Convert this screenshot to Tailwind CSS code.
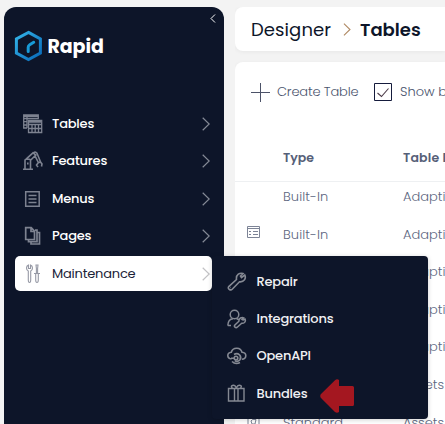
<!DOCTYPE html>
<html lang="en">
<head>
<meta charset="utf-8">
<title>Designer - Tables</title>
<script src="https://cdn.jsdelivr.net/npm/@tailwindcss/browser@4"></script>
</head>
<body class="w-[445px] h-[424px] overflow-hidden bg-[#f3f3f3] font-[Poppins,Inter,sans-serif] text-[13px] relative">
<svg class="hidden">
  <symbol id="chev" viewBox="0 0 8 14"><path d="M.7.7 7.2 7 .7 13.3" fill="none" stroke="currentColor" stroke-width="1.2"/></symbol>
</svg>
<div class="flex h-[424px] pl-1 pt-[7px] gap-[11px]">
  <aside class="w-[220px] shrink-0 bg-[#0d1529] rounded-t-[12px] text-white flex flex-col">
    <div class="flex justify-end h-[21px] pt-[7px] pr-2">
      <svg class="w-[6px] h-[9px]" viewBox="0 0 6 9" fill="none" stroke="#fff" stroke-width="1"><path d="M5 .5 1 4.5 5 8.5"/></svg>
    </div>
    <div class="flex items-center h-[36px] pl-[10px] gap-[5.5px]">
      <svg class="w-[28px] h-[32px]" viewBox="0 0 28 32" fill="none">
        <defs><linearGradient id="g" x1="0" y1="0" x2="1" y2="1"><stop stop-color="#34b5e8"/><stop offset="1" stop-color="#0869b8"/></linearGradient></defs>
        <path d="M14.5 2.4 26.4 9v14L14.5 29.6 2.4 23V9Z" stroke="url(#g)" stroke-width="3"/>
        <path d="M14.2 21.5v-4.2q0-1.7 1.5-2.6l4-2.4" stroke="#189bd8" stroke-width="3" stroke-linecap="round"/>
      </svg>
      <span class="font-bold text-[19px] leading-none tracking-[-0.1px]">Rapid</span>
    </div>
    <nav class="mt-[41px] pl-[11px] pr-3 font-medium leading-[20px] tracking-[-0.2px]">
      <div class="h-[37.5px] flex items-center pl-2 pr-[2px]">
        <svg class="w-[20px] h-[20px] text-[#7d8290]" viewBox="0 0 20 20" fill="none" stroke="currentColor" stroke-width="1.3"><path d="M4 14H.7V1h14.6v4M.7 4.5h15M4 1v13M.7 7.7H4M.7 11H4" /><path d="M1 2h14" stroke-width="2"/><path d="M5.5 6.5h13.2v12H5.5zM5.5 10.5h13M5.5 14.5h13M9 10v8.5M12.2 10v8.5M15.5 10v8.5"/><path d="M5.5 7.5h13" stroke-width="2.5"/></svg>
        <span class="ml-[9px] grow">Tables</span><svg class="w-2 h-[14px] text-[#858a96]"><use href="#chev"/></svg>
      </div>
      <div class="h-[37px] flex items-center pl-2 pr-[2px]">
        <svg class="w-[20px] h-[20px] text-[#7d8290]" viewBox="0 0 20 20" fill="none" stroke="currentColor" stroke-width="1.6"><path d="M0 18.300h10M2 18V9.500q0-1.200 1-1.200h3.500q1 0 1 1.200V18M2.800 8.300l7.200-6.500 2.800 2.200-5.500 5.500M10.500 1.800q2-1.500 3.500.5l3.500 8.500-2 1-3.500-7M15.500 11.500l-2 2.500 1.500 2M17.500 11l1.500 2-.5 2.500M4.800 11.500v2"/></svg>
        <span class="ml-[9px] grow">Features</span><svg class="w-2 h-[14px] text-[#858a96]"><use href="#chev"/></svg>
      </div>
      <div class="h-[38px] flex items-center pl-2 pr-[2px]">
        <svg class="w-[20px] h-[20px] text-[#7d8290]" viewBox="0 0 20 20" fill="none" stroke="currentColor" stroke-width="1.5"><path d="M2.700 2.700h13.500v14.600H2.700zM5.500 6.500h8M5.500 10h8M5.500 13.500h8"/></svg>
        <span class="ml-[9px] grow">Menus</span><svg class="w-2 h-[14px] text-[#858a96]"><use href="#chev"/></svg>
      </div>
      <div class="h-[37.5px] flex items-center pl-2 pr-[2px]">
        <svg class="w-[20px] h-[20px] text-[#7d8290]" viewBox="0 0 20 20" fill="none" stroke="currentColor" stroke-width="1.7"><path d="M2.700 1.700h5.500l3.300 3.500v8.300H2.700zM8 2v3.500h3.500M12 4.200h2v11.500H5.500V14M14.500 6.500h2V18H8v-2"/></svg>
        <span class="ml-[9px] grow">Pages</span><svg class="w-2 h-[14px] text-[#858a96]"><use href="#chev"/></svg>
      </div>
      <div class="h-[35px] mt-px flex items-center pl-2 pr-[2px] bg-white rounded-[5px] text-[#1b2338] font-normal">
        <svg class="w-[20px] h-[20px] text-[#9699a5]" viewBox="0 0 20 20" fill="none" stroke="currentColor" stroke-width="1.1"><path d="M5.500 1v3.500h2V1q2 .7 2 3T7.700 7v9q0 2.500-1.200 2.500T5.300 16V7Q3.500 6.200 3.500 4t2-3zM13 1h2l-.4 3.500v4.700h-1.200V4.500zM11 9.500h6M12.700 10v6q0 2.500 1.300 2.500t1.300-2.500v-6"/></svg>
        <span class="ml-[9px] grow">Maintenance</span><svg class="w-2 h-[14px] text-[#c2c2c5]"><use href="#chev"/></svg>
      </div>
    </nav>
  </aside>
  <main class="w-[210px] shrink-0 overflow-hidden flex flex-col gap-[11px] text-[#566078]">
    <header class="h-[44px] shrink-0 bg-white rounded-l-[8px] shadow-[0_1px_4px_#0000000d] flex items-center pl-4 text-[18px] text-[#0d1529]">
      <span class="w-[92px] tracking-[0.1px]">Designer</span>
      <svg class="w-2 h-[13px] mr-[9px] text-[#b08a64]"><use href="#chev"/></svg>
      <span class="font-semibold">Tables</span>
    </header>
    <section class="grow bg-white rounded-tl-[8px] shadow-[0_1px_4px_#0000000d] font-light whitespace-nowrap">
      <div class="h-[60px] flex items-center pl-4 text-[#4b556e]">
        <svg class="w-[19px] h-[19px] shrink-0" viewBox="0 0 19 19" stroke="#4c5268"><path d="M9.500 0v19M0 9.500h19"/></svg>
        <span class="ml-[7px] w-[97px] shrink-0 tracking-[-0.15px]">Create Table</span>
        <svg class="w-[18px] h-[18px] shrink-0" viewBox="0 0 18 18" fill="none"><path d="M.5.5h17v17H.5z" stroke="#151b3c"/><path d="m3.500 10 4 3.500 7-8" stroke="#4c3b48" stroke-width="1.100"/></svg>
        <span class="ml-2">Show b</span>
      </div>
      <div class="h-[60px] grid grid-cols-[48px_120px_120px] items-center pt-[14px] border-b border-[#eef0f2] font-semibold text-[12.5px]"><span></span><span>Type</span><span class="tracking-[0.2px]">Table D</span></div>
      <div class="-mt-[4px] text-[#5c6680]">
        <div class="h-[37.600px] grid grid-cols-[48px_120px_120px] items-center"><span></span><span class="tracking-[0.1px]">Built-In</span><span>Adapti</span></div>
        <div class="h-[37.600px] grid grid-cols-[48px_120px_120px] items-center"><svg class="ml-3 w-[13px] h-[12px] -mt-1" viewBox="0 0 13 12" fill="none" stroke="#7d8496"><path d="M.5.500h12v11H.5zM.5 2.500h12M2 5.500h2M2 8.500h2M6 5.500h5M6 8.500h5"/></svg><span class="tracking-[0.1px]">Built-In</span><span>Adapti</span></div>
        <div class="h-[37.600px] grid grid-cols-[48px_120px_120px] items-center"><span></span><span></span><span>Adapti</span></div>
        <div class="h-[37.600px] grid grid-cols-[48px_120px_120px] items-center"><span></span><span></span><span>Adapti</span></div>
        <div class="h-[37.600px] grid grid-cols-[48px_120px_120px] items-center"><span></span><span></span><span>Adapti</span></div>
        <div class="h-[37.600px] grid grid-cols-[48px_120px_120px] items-center"><span></span><span></span><span>Assets</span></div>
        <div class="h-[37.600px] grid grid-cols-[48px_120px_120px] items-center"><svg class="ml-3 w-[13px] h-[13px]" viewBox="0 0 13 13" fill="none" stroke="#7d8496"><path d="M1 .500h11v10L9 12.500H4L1 10zM4 5q1-2.500 5-1.500L8 8H5z"/></svg><span>Standard</span><span>Assets</span></div>
      </div>
    </section>
  </main>
</div>
<div class="absolute left-[212px] top-[256px] w-[216px] h-[163px] bg-[#0d1529] rounded-[4px] shadow-[0_1px_5px_#0000002e] text-[#f0f0f3] font-medium tracking-[-0.2px] pt-[7px] pl-[15px]">
  <div class="h-[37.400px] flex items-center gap-[9.5px]">
    <svg class="w-[20px] h-[20px]" viewBox="0 0 20 20" fill="none" stroke="#858993" stroke-width="1.600"><path d="M14.500 5.500 17.800 3q1.200 2.500-.3 4.800-1.800 2.400-5 2L5.200 17.300q-1.300 1.300-3 0t-.2-3L9.500 7.500Q9 4 11.300 2.200 13.500.7 16 1.500L13.500 4z"/><path d="M3.500 15.500h.5"/></svg>
    <span>Repair</span></div>
  <div class="h-[37px] flex items-center gap-[9.5px]">
    <svg class="w-[20px] h-[20px]" viewBox="0 0 20 20" fill="none" stroke="#858993" stroke-width="1.500"><circle cx="7.500" cy="5.500" r="4.300"/><path d="M.8 16.500Q1.200 10 6 9.800M9.500 9.500l2 1M.8 16.500H4M16 11l2-1q1 2-.5 3.500-1.300 1-2.800.7L10.500 18q-1.300 1.200-2.500.2t-.1-2.300l4-3.700Q11.800 10 13.500 9t3.200-.2L15 10.500z"/></svg>
    <span>Integrations</span></div>
  <div class="h-[37px] flex items-center gap-[9.5px]">
    <svg class="w-[20px] h-[20px]" viewBox="0 0 20 20" fill="none" stroke="#858993" stroke-width="1.600"><path d="M4.500 13Q.8 12.500.8 9.500.8 6.500 4.300 6.200 5.500 2 10 2.200q4 .1 5 4 3.800.3 3.800 3.500 0 3.300-4 3.500"/><path d="M7 8.500q3-1.800 5.500.3 2.300 2.700.3 5.200-2.300 2.200-5 .8M5 15.500q3.500 3.500 8 1M4 12.300h4"/><circle cx="9" cy="12" r="1.800"/></svg>
    <span>OpenAPI</span></div>
  <div class="h-[38px] flex items-center gap-[9.5px]">
    <svg class="w-[20px] h-[20px]" viewBox="0 0 20 20" fill="none" stroke="#858993" stroke-width="1.400"><path d="M1.500 5.500h15.500v12.500h-15.500zM7.500 5.500v12M11 5.500v12M9.300 5Q8 1.500 5.500 2.500T6 5.500M9.300 5q1.500-3.500 4-2.500t-.5 3"/></svg>
    <span>Bundles</span></div>
</div>
<svg class="absolute left-[320px] top-[379px] w-[34px] h-[34px]" viewBox="0 0 34 34"><path d="M.4 17Q0 16 1 15L15 1.200Q17-.5 19 1v6h13.500q1.500 0 1.500 1.500v17q0 1.500-1.500 1.500H19v6q-2 1.500-4 0L1 19Q0 18 .4 17z" fill="#a41720"/></svg>
</body>
</html>
